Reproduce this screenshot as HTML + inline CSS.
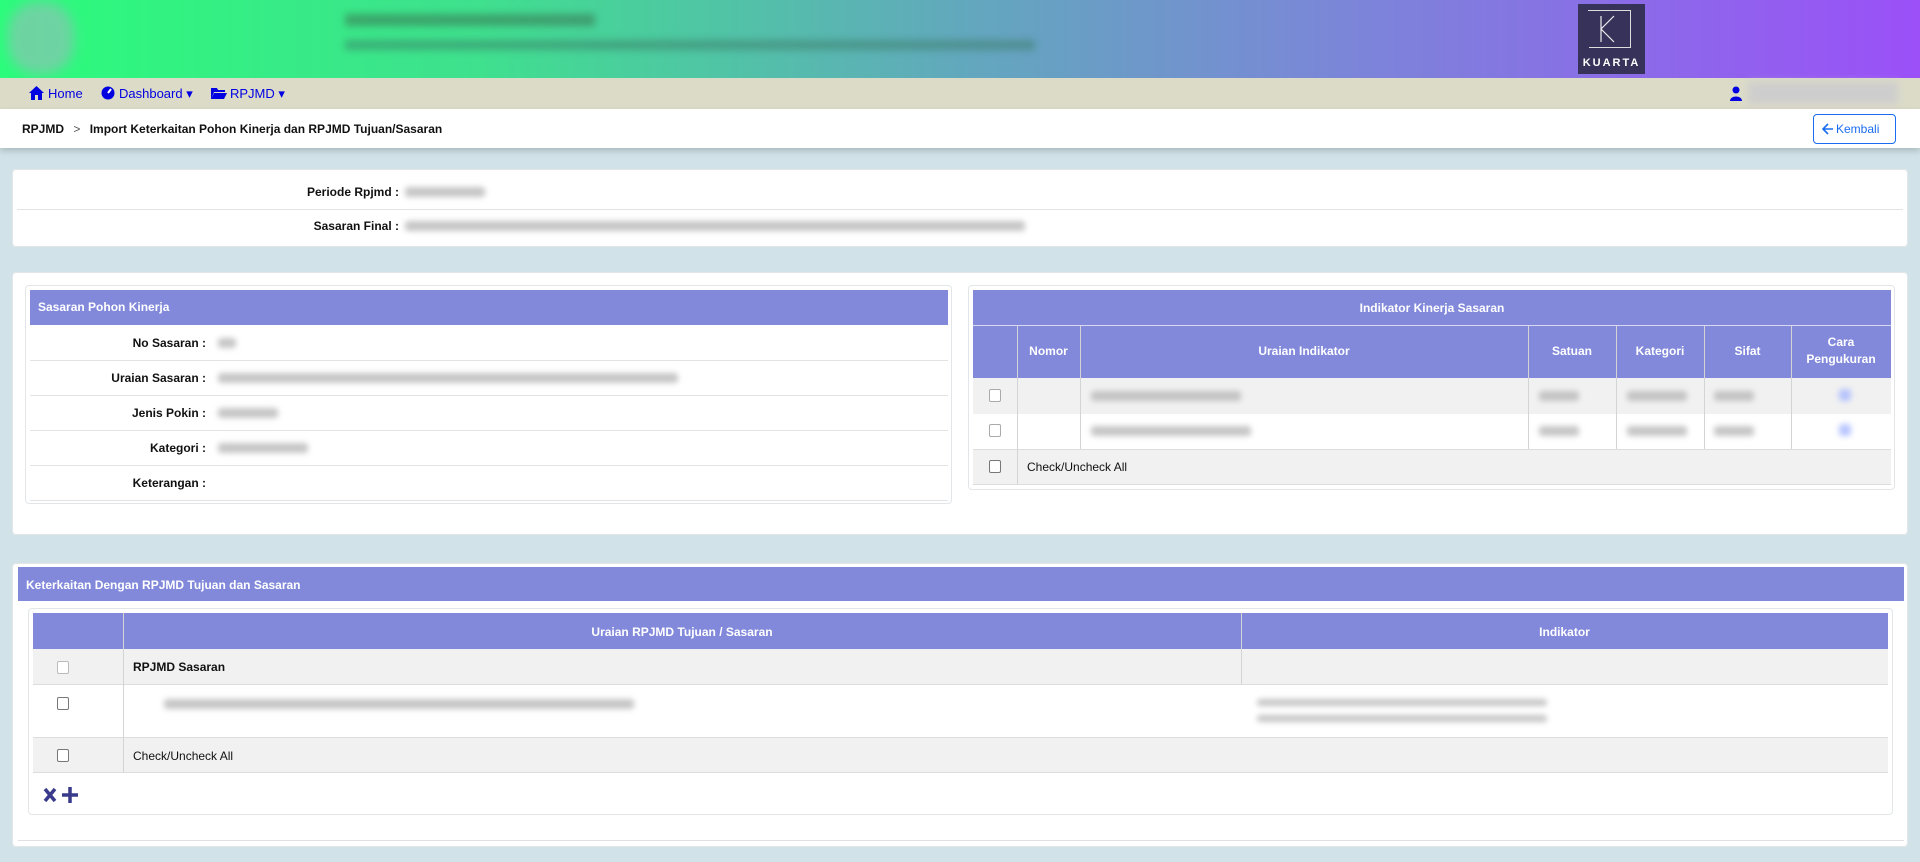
<!DOCTYPE html>
<html><head><meta charset="utf-8"><style>
*{box-sizing:border-box;margin:0;padding:0}
body{width:1920px;height:862px;overflow:hidden;background:#d1e3e9;font-family:"Liberation Sans","DejaVu Sans",sans-serif;font-size:12px;color:#111;position:relative}
.abs{position:absolute}
.hdr{left:0;top:0;width:1920px;height:78px;background:linear-gradient(90deg,#2bfc7b 0%,#3fe08e 25%,#62a8bd 50%,#7b86d8 70%,#9b50f8 100%)}
.nav{left:0;top:78px;width:1920px;height:31px;background:#dcdbc8;color:#0000e0;font-size:13px}
.nav span{position:absolute;top:8px}
.bc{left:0;top:109px;width:1920px;height:39px;background:#fff;box-shadow:0 3px 6px rgba(0,0,0,.18)}
.card{background:#fff;border:1px solid #e2e6e8;border-radius:4px}
.blur{background:#b8b8b8;filter:blur(3px);height:10px;border-radius:3px;position:absolute;opacity:.8}
.hbar{background:#8289db;color:#fff;font-weight:bold}
.lbl{position:absolute;font-weight:bold;text-align:right;font-size:12px}
.row{position:absolute;border-top:1px solid #e3e3e3}
.cb{position:absolute;width:12px;height:13px;border:1px solid #777;border-radius:2px;background:#fff}
.vl{position:absolute;width:1px;background:#d4d4d4}
.th{position:absolute;color:#fff;font-weight:bold;font-size:12px;text-align:center}
</style></head><body>
<div class="abs hdr"></div>
<div class="abs" style="left:8px;top:2px;width:66px;height:72px;border-radius:30px;background:#9bb;filter:blur(6px);opacity:.6"></div>
<div class="abs" style="left:345px;top:14px;width:250px;height:12px;background:#3a7a55;filter:blur(4px);opacity:.6"></div>
<div class="abs" style="left:345px;top:40px;width:690px;height:10px;background:#3a7a65;filter:blur(4px);opacity:.5"></div>
<div class="abs" style="left:1578px;top:4px;width:67px;height:70px;background:#37325a"></div>
<div class="abs" style="left:1589px;top:10px;width:42px;height:38px;border:1px solid #ddd;border-left:none;border-bottom:1px solid #ddd"></div>
<div class="abs" style="left:1588px;top:10px;width:6px;height:1px;background:#ddd"></div>
<svg class="abs" style="left:1598px;top:14px" width="22" height="30"><path d="M3 2V28M3 15L16 2M3 15L16 28" stroke="#eee" stroke-width="1.2" fill="none"/></svg>
<div class="abs" style="left:1578px;top:57px;width:67px;text-align:center;color:#fff;font-weight:bold;font-size:11px;letter-spacing:2px">KUARTA</div>

<div class="abs nav">
<svg class="abs" style="left:29px;top:8px" width="15" height="14"><path d="M7.5 0L0 7H2V14H6V9H9V14H13V7H15Z" fill="#0000e0"/></svg>
<span style="left:48px">Home</span>
<svg class="abs" style="left:101px;top:8px" width="14" height="14"><circle cx="7" cy="7" r="6.5" fill="#0000e0"/><path d="M7 7L10 3" stroke="#fff" stroke-width="2"/></svg>
<span style="left:119px">Dashboard ▾</span>
<svg class="abs" style="left:211px;top:9px" width="16" height="12"><path d="M0 1H6L7 3H14V5H3L0 12Z M3 6H16L13 12H0Z" fill="#0000e0"/></svg>
<span style="left:230px">RPJMD ▾</span>
<svg class="abs" style="left:1730px;top:8px" width="12" height="15"><circle cx="6" cy="4" r="3.5" fill="#0000e0"/><path d="M0 15C0 9 12 9 12 15Z" fill="#0000e0"/></svg>
<div class="abs" style="left:1748px;top:4px;width:150px;height:22px;background:#c8c8d0;filter:blur(4px);opacity:.7"></div>
</div>

<div class="abs bc">
<div class="abs" style="left:22px;top:13px;font-weight:bold;font-size:12px">RPJMD <span style="font-weight:normal;color:#555;margin:0 6px">&gt;</span> Import Keterkaitan Pohon Kinerja dan RPJMD Tujuan/Sasaran</div>
<div class="abs" style="left:1813px;top:5px;width:83px;height:30px;border:1px solid #1a6cf0;border-radius:4px;color:#1a6cf0;font-size:12px;line-height:28px;padding-left:22px">Kembali</div>
<svg class="abs" style="left:1822px;top:14px" width="12" height="12"><path d="M11 6H2M6 1L1 6L6 11" stroke="#1a6cf0" stroke-width="1.6" fill="none"/></svg>
</div>

<!-- card 1 -->
<div class="abs card" style="left:12px;top:169px;width:1896px;height:78px">
<div class="row" style="left:4px;top:39px;width:1886px"></div>
<div class="lbl" style="left:200px;width:186px;top:15px">Periode Rpjmd :</div>
<div class="blur" style="left:392px;top:17px;width:80px"></div>
<div class="lbl" style="left:200px;width:186px;top:49px">Sasaran Final :</div>
<div class="blur" style="left:392px;top:51px;width:620px"></div>
</div>

<!-- card 2 -->
<div class="abs card" style="left:12px;top:272px;width:1896px;height:263px">
<div class="abs card" style="left:12px;top:12px;width:927px;height:219px">
<div class="abs hbar" style="left:4px;top:4px;width:918px;height:35px;padding:10px 8px;font-size:12px">Sasaran Pohon Kinerja</div>
<div class="row" style="left:4px;top:74px;width:918px"></div>
<div class="row" style="left:4px;top:109px;width:918px"></div>
<div class="row" style="left:4px;top:144px;width:918px"></div>
<div class="row" style="left:4px;top:179px;width:918px"></div>
<div class="row" style="left:4px;top:214px;width:918px"></div>
<div class="lbl" style="left:30px;width:150px;top:50px">No Sasaran :</div>
<div class="lbl" style="left:30px;width:150px;top:85px">Uraian Sasaran :</div>
<div class="lbl" style="left:30px;width:150px;top:120px">Jenis Pokin :</div>
<div class="lbl" style="left:30px;width:150px;top:155px">Kategori :</div>
<div class="lbl" style="left:30px;width:150px;top:190px">Keterangan :</div>
<div class="blur" style="left:192px;top:52px;width:18px"></div>
<div class="blur" style="left:192px;top:87px;width:460px"></div>
<div class="blur" style="left:192px;top:122px;width:60px"></div>
<div class="blur" style="left:192px;top:157px;width:90px"></div>
</div>
<div class="abs card" style="left:955px;top:12px;width:927px;height:205px">
<div class="abs hbar" style="left:4px;top:4px;width:918px;height:88px"></div>
<div class="th" style="left:4px;width:918px;top:15px">Indikator Kinerja Sasaran</div>
<div class="abs" style="left:4px;top:39px;width:918px;height:1px;background:#d8d8f0"></div>
<div class="abs" style="left:4px;top:92px;width:918px;height:36px;background:#f1f1f1"></div>
<div class="abs" style="left:4px;top:163px;width:918px;height:36px;background:#f1f1f1;border-top:1px solid #ddd;border-bottom:1px solid #ddd"></div>
<div class="vl" style="left:48px;top:40px;height:159px"></div>
<div class="vl" style="left:111px;top:40px;height:123px"></div>
<div class="vl" style="left:559px;top:40px;height:123px"></div>
<div class="vl" style="left:647px;top:40px;height:123px"></div>
<div class="vl" style="left:735px;top:40px;height:123px"></div>
<div class="vl" style="left:822px;top:40px;height:123px"></div>
<div class="th" style="left:48px;width:63px;top:58px">Nomor</div>
<div class="th" style="left:111px;width:448px;top:58px">Uraian Indikator</div>
<div class="th" style="left:559px;width:88px;top:58px">Satuan</div>
<div class="th" style="left:647px;width:88px;top:58px">Kategori</div>
<div class="th" style="left:735px;width:87px;top:58px">Sifat</div>
<div class="th" style="left:822px;width:100px;top:48px;line-height:17px">Cara<br>Pengukuran</div>
<div class="cb" style="left:20px;top:103px;border-color:#aaa"></div>
<div class="cb" style="left:20px;top:138px;border-color:#aaa"></div>
<div class="cb" style="left:20px;top:174px"></div>
<div class="abs" style="left:58px;top:174px">Check/Uncheck All</div>
<div class="blur" style="left:122px;top:105px;width:150px"></div>
<div class="blur" style="left:122px;top:140px;width:160px"></div>
<div class="blur" style="left:570px;top:105px;width:40px"></div><div class="blur" style="left:570px;top:140px;width:40px"></div>
<div class="blur" style="left:658px;top:105px;width:60px"></div><div class="blur" style="left:658px;top:140px;width:60px"></div>
<div class="blur" style="left:745px;top:105px;width:40px"></div><div class="blur" style="left:745px;top:140px;width:40px"></div>
<div class="blur" style="left:870px;top:103px;width:12px;height:12px;background:#a8b8ff"></div>
<div class="blur" style="left:870px;top:138px;width:12px;height:12px;background:#a8b8ff"></div>
</div>
</div>

<!-- card 3 -->
<div class="abs card" style="left:12px;top:563px;width:1896px;height:284px">
<div class="abs hbar" style="left:5px;top:3px;width:1886px;height:34px;padding:11px 8px;font-size:12px">Keterkaitan Dengan RPJMD Tujuan dan Sasaran</div>
<div class="abs card" style="left:15px;top:44px;width:1865px;height:207px">
<div class="abs hbar" style="left:4px;top:4px;width:1855px;height:36px"></div>
<div class="abs" style="left:4px;top:40px;width:1855px;height:35px;background:#f1f1f1"></div>
<div class="abs" style="left:4px;top:128px;width:1855px;height:36px;background:#f1f1f1;border-top:1px solid #ddd;border-bottom:1px solid #ddd"></div>
<div class="abs" style="left:4px;top:75px;width:1855px;height:1px;background:#ddd"></div>
<div class="vl" style="left:94px;top:4px;height:160px"></div>
<div class="vl" style="left:1212px;top:4px;height:71px"></div>
<div class="th" style="left:94px;width:1118px;top:16px">Uraian RPJMD Tujuan / Sasaran</div>
<div class="th" style="left:1212px;width:647px;top:16px">Indikator</div>
<div class="cb" style="left:28px;top:52px;border-color:#bbb"></div>
<div class="abs" style="left:104px;top:51px;font-weight:bold">RPJMD Sasaran</div>
<div class="cb" style="left:28px;top:88px"></div>
<div class="blur" style="left:135px;top:90px;width:470px"></div>
<div class="blur" style="left:1228px;top:90px;width:290px;height:7px"></div>
<div class="blur" style="left:1228px;top:106px;width:290px;height:7px"></div>
<div class="cb" style="left:28px;top:140px"></div>
<div class="abs" style="left:104px;top:140px">Check/Uncheck All</div>
<svg class="abs" style="left:14px;top:177px" width="40" height="18"><path d="M2 3L12 15M12 3L2 15" stroke="#3a3a8a" stroke-width="3.5"/><path d="M27 1V17M19 9H35" stroke="#3a3a8a" stroke-width="3.5"/></svg>
</div>
<div class="abs" style="left:5px;top:276px;width:1886px;height:1px;background:#e0e0e0"></div>
</div>
</body></html>
